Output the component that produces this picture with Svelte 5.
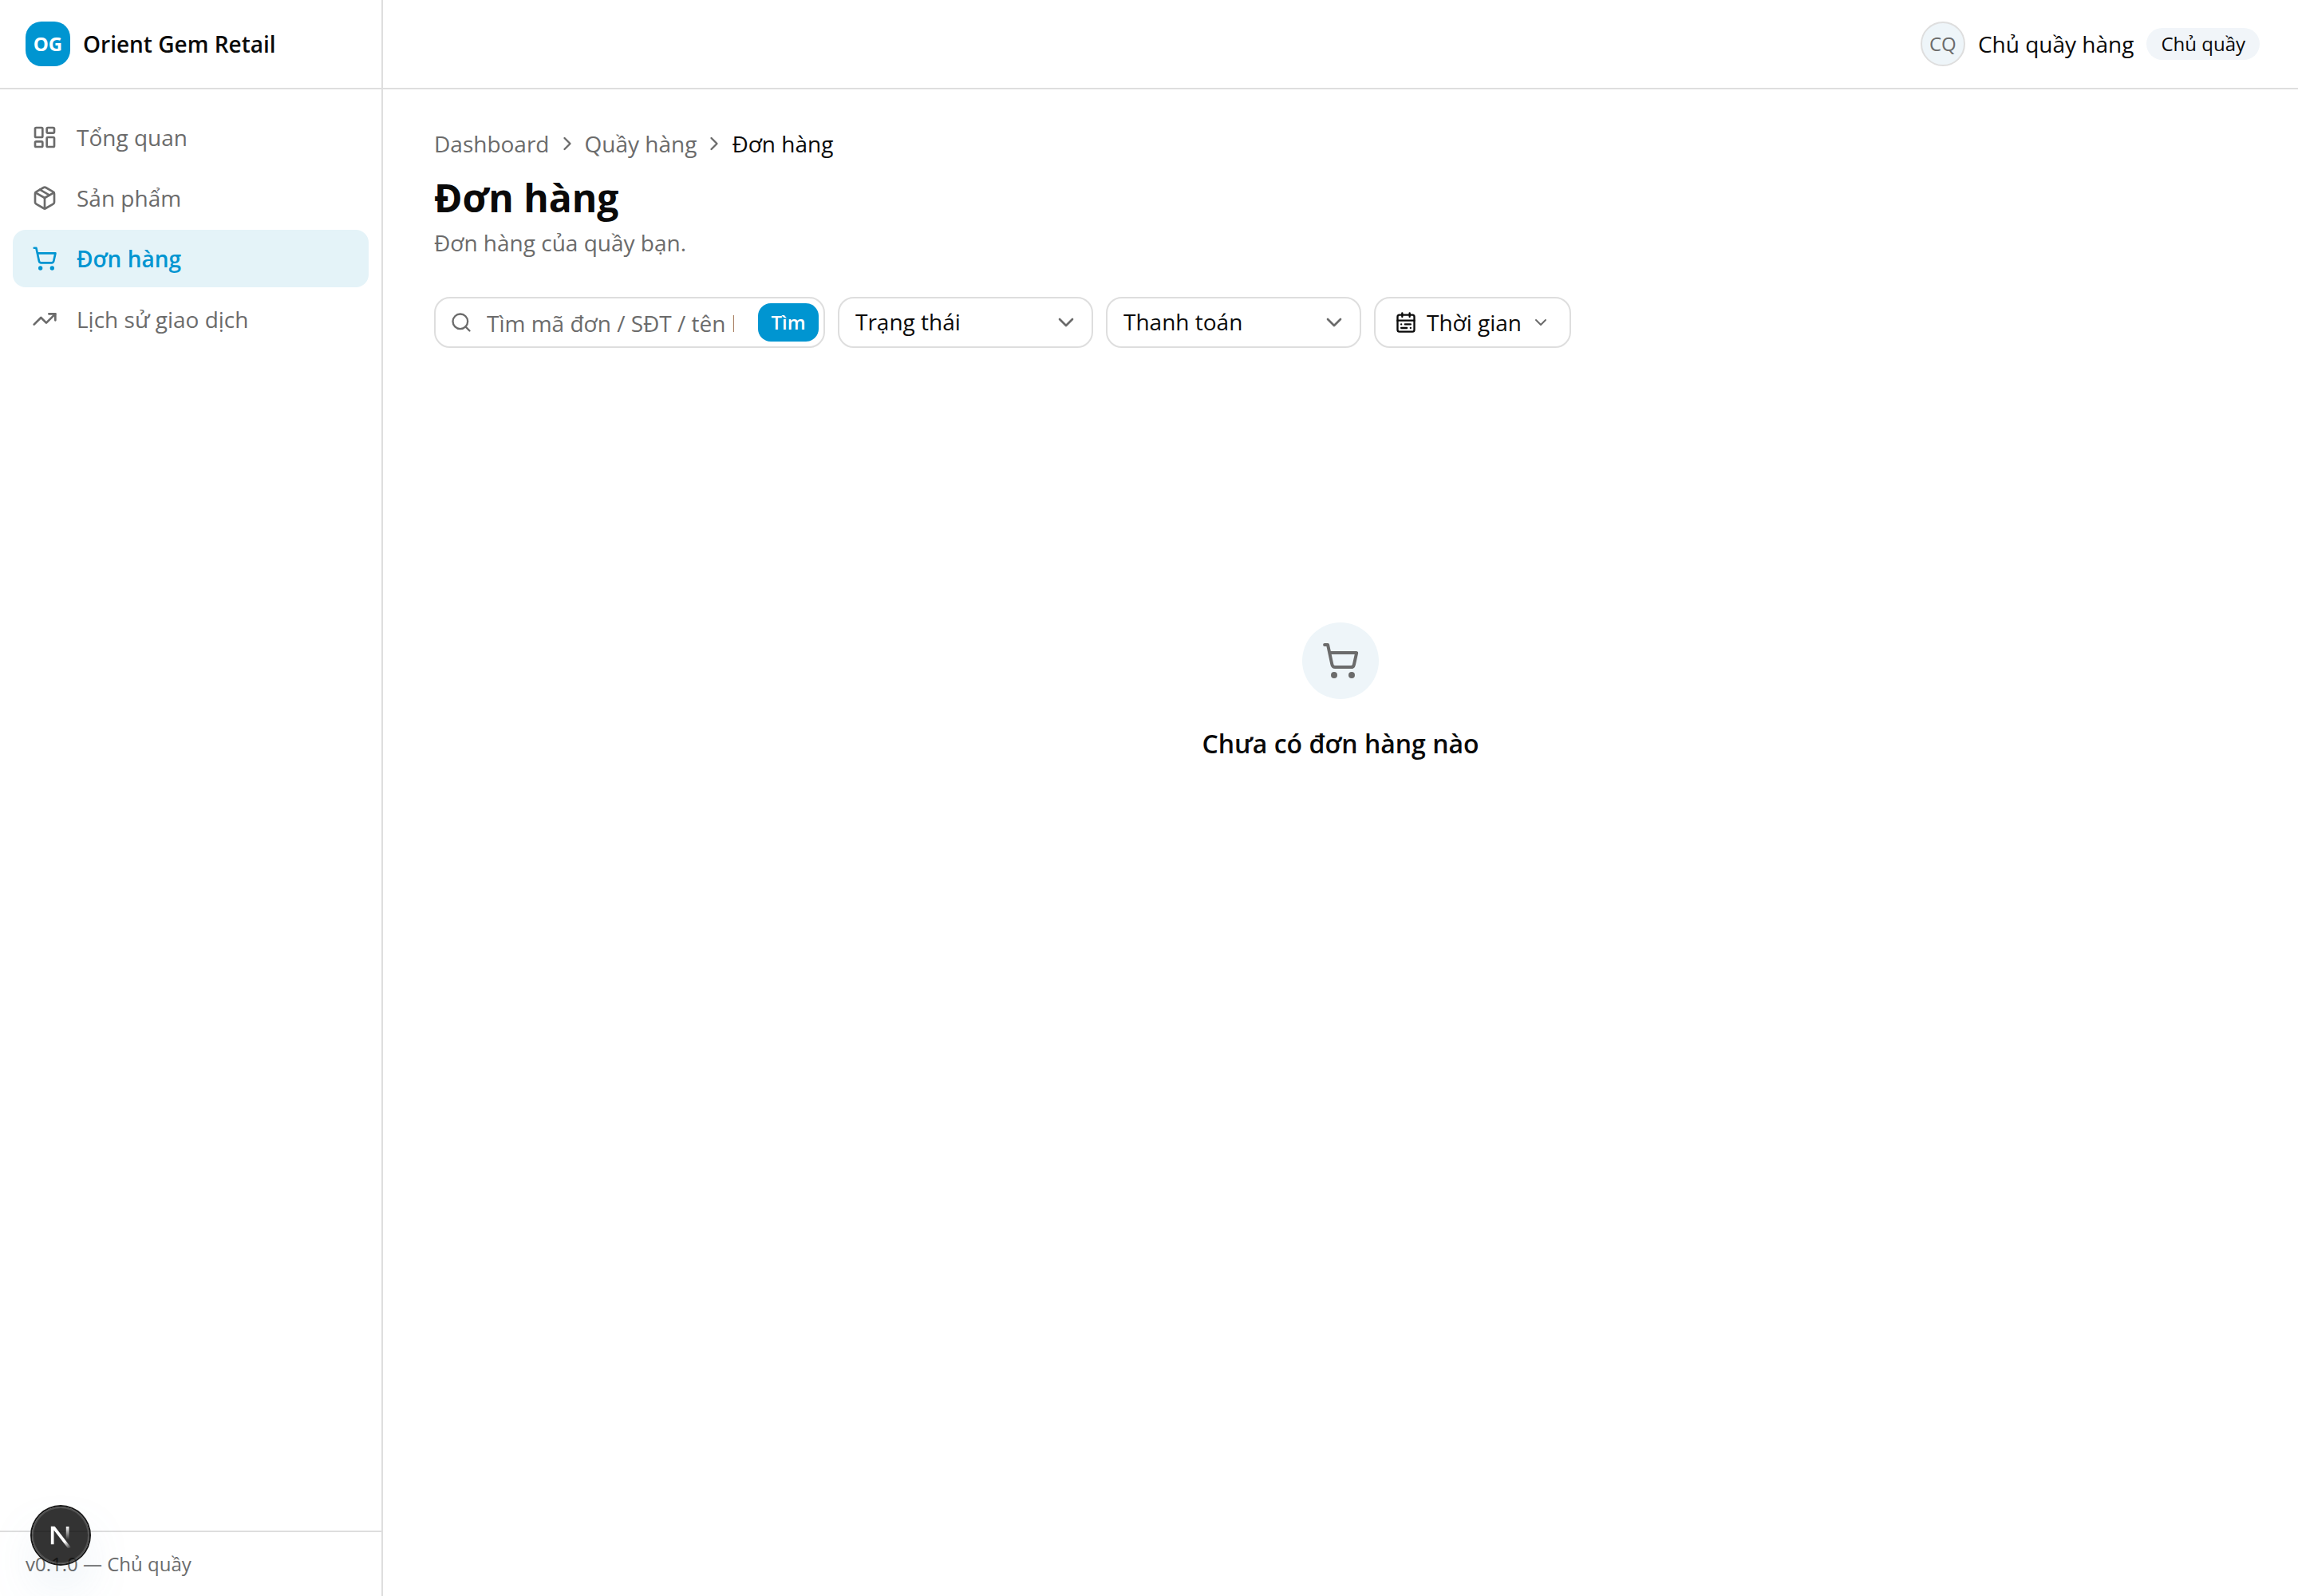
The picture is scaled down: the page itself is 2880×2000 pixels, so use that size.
<script>
  const nav = [
    { label: 'Tổng quan', icon: 'dashboard' },
    { label: 'Sản phẩm', icon: 'package' },
    { label: 'Đơn hàng', icon: 'cart', active: true },
    { label: 'Lịch sử giao dịch', icon: 'trend' }
  ];
  const filters = ['Trạng thái', 'Thanh toán'];
  let query = $state('');
</script>

{#snippet icon(name, size)}
  <svg class="icon" width={size} height={size} viewBox="0 0 24 24" aria-hidden="true">
    {#if name === 'dashboard'}
      <rect width="7" height="9" x="3" y="3" rx="1" />
      <rect width="7" height="5" x="14" y="3" rx="1" />
      <rect width="7" height="9" x="14" y="12" rx="1" />
      <rect width="7" height="5" x="3" y="16" rx="1" />
    {:else if name === 'package'}
      <path d="M11 21.73a2 2 0 0 0 2 0l7-4A2 2 0 0 0 21 16V8a2 2 0 0 0-1-1.73l-7-4a2 2 0 0 0-2 0l-7 4A2 2 0 0 0 3 8v8a2 2 0 0 0 1 1.73z" />
      <path d="M12 22V12" />
      <path d="M3.29 7 12 12l8.71-5" />
      <path d="m7.5 4.27 9 5.15" />
    {:else if name === 'cart'}
      <circle cx="8" cy="21" r="1" />
      <circle cx="19" cy="21" r="1" />
      <path d="M2.05 2.05h2l2.66 12.42a2 2 0 0 0 2 1.58h9.78a2 2 0 0 0 1.95-1.57l1.65-7.43H5.12" />
    {:else if name === 'trend'}
      <path d="M16 7h6v6" />
      <path d="m22 7-8.5 8.5-5-5L2 17" />
    {:else if name === 'search'}
      <path d="m21 21-4.34-4.34" />
      <circle cx="11" cy="11" r="8" />
    {:else if name === 'calendar'}
      <rect width="18" height="18" x="3" y="4" rx="2" />
      <path d="M16 2v4M3 10h18M8 2v4M17 14h-6M13 18H7M7 14h.01M17 18h.01" />
    {:else if name === 'right'}
      <path d="m9 18 6-6-6-6" />
    {:else if name === 'down'}
      <path d="m6 9 6 6 6-6" />
    {/if}
  </svg>
{/snippet}

<div class="shell">
  <aside class="sidebar">
    <div class="brand">
      <span class="logo">OG</span>
      <span class="brand-name">Orient Gem Retail</span>
    </div>
    <nav class="nav" aria-label="Menu">
      {#each nav as item}
        <a class="nav-item" class:active={item.active} href="#{item.icon}" aria-current={item.active ? 'page' : undefined}>
          {@render icon(item.icon, 32)}
          <span>{item.label}</span>
        </a>
      {/each}
    </nav>
    <div class="version">v0.1.0 — Chủ quầy</div>
  </aside>

  <div class="page">
    <header class="topbar">
      <span class="avatar">CQ</span>
      <span class="user">Chủ quầy hàng</span>
      <span class="badge">Chủ quầy</span>
    </header>

    <main class="content">
      <nav class="crumbs" aria-label="Breadcrumb">
        <a href="#dashboard">Dashboard</a>
        {@render icon('right', 28)}
        <a href="#booth">Quầy hàng</a>
        {@render icon('right', 28)}
        <span class="current" aria-current="page">Đơn hàng</span>
      </nav>
      <h1>Đơn hàng</h1>
      <p class="subtitle">Đơn hàng của quầy bạn.</p>

      <div class="filters">
        <form class="search" onsubmit={(e) => e.preventDefault()}>
          {@render icon('search', 28)}
          <input type="text" aria-label="Tìm đơn hàng" placeholder="Tìm mã đơn / SĐT / tên khách" bind:value={query} />
          <button class="submit" type="submit">Tìm</button>
        </form>
        {#each filters as f}
          <div class="select">
            <select aria-label={f}>
              <option>{f}</option>
            </select>
            <span class="caret">{@render icon('down', 32)}</span>
          </div>
        {/each}
        <button class="range" type="button">
          {@render icon('calendar', 28)}
          <span>Thời gian</span>
          <span class="range-caret">{@render icon('down', 24)}</span>
        </button>
      </div>

      <section class="empty">
        <div class="empty-icon">{@render icon('cart', 48)}</div>
        <h2>Chưa có đơn hàng nào</h2>
      </section>
    </main>
  </div>

  <button class="devtools" type="button" aria-label="Next.js Dev Tools">
    <svg width="32" height="32" viewBox="-0.5 -1 16 16" fill="none" aria-hidden="true">
      <defs>
        <linearGradient id="n-diagonal" x1="9.96" y1="11.12" x2="15.48" y2="17.97" gradientUnits="userSpaceOnUse">
          <stop stop-color="#fff" />
          <stop offset="0.604" stop-color="#fff" stop-opacity="0" />
        </linearGradient>
        <linearGradient id="n-stem" x1="11.82" y1="1.4" x2="11.79" y2="9.63" gradientUnits="userSpaceOnUse">
          <stop stop-color="#fff" />
          <stop offset="1" stop-color="#fff" stop-opacity="0" />
        </linearGradient>
        <clipPath id="n-clip"><rect x="0" y="1.4" width="16" height="15" /></clipPath>
      </defs>
      <g clip-path="url(#n-clip)" stroke-width="1.86">
        <path d="M13.3 15.2 2.34 1v11.6" stroke="url(#n-diagonal)" />
        <path d="M11.825 1.5v11.6" stroke="url(#n-stem)" />
      </g>
    </svg>
  </button>
</div>

<style>
  :global(body) {
    margin: 0;
    background: #fff;
  }

  .shell {
    --ink: #0a0a0a;
    --muted: #6b6b6b;
    --line: #dedede;
    --primary: #0095d1;
    display: flex;
    min-height: 100vh;
    color: var(--ink);
    font-family: 'Open Sans', 'Noto Sans', sans-serif;
    font-size: 28px;
    line-height: 40px;
  }

  .shell :where(*) {
    box-sizing: border-box;
  }

  .icon {
    display: block;
    flex: none;
    fill: none;
    stroke: currentColor;
    stroke-width: 2;
    stroke-linecap: round;
    stroke-linejoin: round;
  }

  input,
  select,
  button {
    font: inherit;
    color: inherit;
  }

  a {
    color: inherit;
    text-decoration: none;
  }

  .sidebar {
    position: sticky;
    top: 0;
    display: flex;
    flex-direction: column;
    flex: none;
    width: 480px;
    height: 100vh;
    border-right: 2px solid var(--line);
  }

  .brand {
    display: flex;
    align-items: center;
    gap: 16px;
    height: 112px;
    padding: 0 32px;
    border-bottom: 2px solid var(--line);
  }

  .logo {
    display: grid;
    place-items: center;
    width: 56px;
    height: 56px;
    border-radius: 20px;
    background: var(--primary);
    color: #fff;
    font-size: 24px;
    font-weight: 700;
    line-height: 32px;
  }

  .brand-name {
    font-weight: 600;
  }

  .nav {
    display: flex;
    flex: 1;
    flex-direction: column;
    gap: 4px;
    padding: 24px 16px;
  }

  .nav-item {
    display: flex;
    align-items: center;
    gap: 24px;
    height: 72px;
    padding: 0 24px;
    border-radius: 16px;
    color: var(--muted);
  }

  .nav-item:not(.active),
  .user,
  .badge,
  .current {
    font-weight: 500;
    font-variation-settings: 'wght' 500;
  }

  .nav-item.active {
    background: #e4f3f8;
    color: var(--primary);
    font-weight: 600;
  }

  .version {
    padding: 24px 32px;
    border-top: 2px solid var(--line);
    color: var(--muted);
    font-size: 24px;
    line-height: 32px;
  }

  .page {
    display: flex;
    flex: 1;
    flex-direction: column;
    min-width: 0;
  }

  .topbar {
    display: flex;
    align-items: center;
    justify-content: flex-end;
    gap: 16px;
    height: 112px;
    padding: 0 48px;
    border-bottom: 2px solid var(--line);
  }

  .avatar {
    display: grid;
    place-items: center;
    width: 56px;
    height: 56px;
    border: 2px solid var(--line);
    border-radius: 50%;
    background: #eef5f9;
    color: var(--muted);
    font-size: 24px;
    line-height: 32px;
  }

  .badge {
    padding: 4px 18px;
    border-radius: 20px;
    background: #f1f5f9;
    font-size: 24px;
    line-height: 32px;
  }

  .content {
    display: flex;
    flex: 1;
    flex-direction: column;
    padding: 48px 64px;
  }

  .crumbs {
    display: flex;
    align-items: center;
    gap: 8px;
    color: var(--muted);
  }

  .current {
    color: var(--ink);
  }

  h1 {
    margin: 16px 0 4px;
    font-size: 48px;
    font-weight: 700;
    line-height: 64px;
  }

  .subtitle {
    margin: 0;
    color: var(--muted);
  }

  .filters {
    display: flex;
    flex-wrap: wrap;
    gap: 16px;
    margin-top: 48px;
  }

  .search {
    display: flex;
    align-items: center;
    width: 490px;
    height: 64px;
    padding: 0 6px 0 18px;
    border: 2px solid var(--line);
    border-radius: 20px;
    color: var(--muted);
  }

  .search input {
    flex: 1;
    min-width: 0;
    height: 60px;
    margin: 0 30px 0 18px;
    padding: 2px 0 0;
    border: 0;
    outline: 0;
    background: none;
    color: var(--ink);
  }

  .search input::placeholder {
    color: var(--muted);
    opacity: 1;
  }

  .submit {
    width: 76px;
    height: 48px;
    padding: 0;
    border: 0;
    border-radius: 16px;
    background: var(--primary);
    color: #fff;
    font-size: 24px;
    font-weight: 600;
    line-height: 32px;
  }

  .select {
    display: grid;
    align-items: center;
    width: 320px;
    height: 64px;
  }

  .select select {
    grid-area: 1 / 1;
    appearance: none;
    width: 100%;
    height: 64px;
    padding: 0 56px 2px 20px;
    border: 2px solid var(--line);
    border-radius: 20px;
    background: none;
  }

  .caret {
    grid-area: 1 / 1;
    justify-self: end;
    margin-right: 18px;
    color: var(--muted);
    pointer-events: none;
  }

  .range {
    display: flex;
    align-items: center;
    gap: 12px;
    height: 64px;
    padding: 0 24px;
    border: 2px solid var(--line);
    border-radius: 20px;
    background: none;
  }

  .range-caret {
    color: var(--muted);
  }

  .empty {
    display: flex;
    flex-direction: column;
    align-items: center;
    gap: 32px;
    padding: 344px 0 64px;
  }

  .empty-icon {
    display: grid;
    place-items: center;
    width: 96px;
    height: 96px;
    border-radius: 50%;
    background: #eef5f9;
    color: var(--muted);
  }

  h2 {
    margin: 0;
    font-size: 32px;
    font-weight: 600;
    line-height: 48px;
  }

  .devtools {
    position: fixed;
    bottom: 40px;
    left: 40px;
    display: grid;
    place-items: center;
    width: 72px;
    height: 72px;
    padding: 0;
    border: 0;
    border-radius: 50%;
    background: rgba(0, 0, 0, 0.8);
    box-shadow:
      0 0 0 2px #171717,
      inset 0 0 0 2px rgba(255, 255, 255, 0.14),
      0 32px 64px -16px rgba(100, 150, 190, 0.36);
  }
</style>
